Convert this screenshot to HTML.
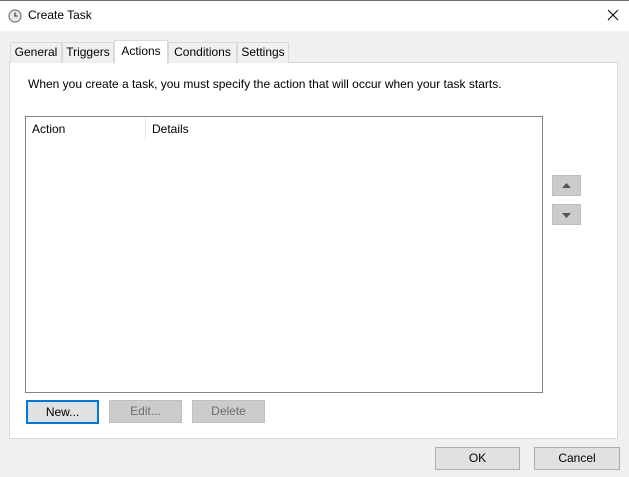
<!DOCTYPE html>
<html><head><style>
body{margin:0;width:629px;height:477px;background:#f0f0f0;font-family:"Liberation Sans",sans-serif;font-size:12px;color:#000;position:relative;overflow:hidden}
.a{position:absolute;box-sizing:border-box}
.tab{position:absolute;top:42px;height:21px;border:1px solid #d9d9d9;border-bottom:none;background:#f0f0f0;text-align:center;line-height:19px;box-sizing:border-box}
.btn{position:absolute;box-sizing:border-box;border:1px solid #adadad;background:#e1e1e1;text-align:center;line-height:21px}
.dis{background:#cccccc;border-color:#bfbfbf;color:#6d6d6d}
</style></head><body>
<div class="a" style="left:0;top:0;width:629px;height:31px;background:#fff;border-top:1px solid #6e6e6e"></div>
<svg class="a" style="left:8px;top:9px" width="14" height="14" viewBox="0 0 14 14"><circle cx="7" cy="7" r="6" fill="#e8e8e8" stroke="#777" stroke-width="1.2"/><path d="M7 3.5V7H9.5" stroke="#444" stroke-width="1.2" fill="none"/></svg>
<div class="a" style="left:28px;top:8px;font-size:12px">Create Task</div>
<svg class="a" style="left:607px;top:9px" width="12" height="12"><path d="M1 1L11 11M11 1L1 11" stroke="#000" stroke-width="1"/></svg>
<div class="a" style="left:9px;top:62px;width:609px;height:377px;background:#fff;border:1px solid #d9d9d9"></div>
<div class="tab" style="left:10px;width:52px">General</div>
<div class="tab" style="left:62px;width:52px">Triggers</div>
<div class="tab" style="left:114px;width:54px;top:40px;height:24px;background:#fff;line-height:20px">Actions</div>
<div class="tab" style="left:168px;width:69px">Conditions</div>
<div class="tab" style="left:237px;width:52px">Settings</div>
<div class="a" style="left:28px;top:77px">When you create a task, you must specify the action that will occur when your task starts.</div>
<div class="a" style="left:25px;top:116px;width:518px;height:277px;background:#fff;border:1px solid #828282"></div>
<div class="a" style="left:32px;top:122px">Action</div>
<div class="a" style="left:145px;top:118px;width:1px;height:22px;background:#e5e5e5"></div>
<div class="a" style="left:152px;top:122px">Details</div>
<div class="btn dis" style="left:552px;top:175px;width:29px;height:21px"><svg width="9" height="5" style="position:absolute;left:9px;top:7px"><path d="M0 5L4.5 0L9 5Z" fill="#555"/></svg></div>
<div class="btn dis" style="left:552px;top:204px;width:29px;height:21px"><svg width="9" height="5" style="position:absolute;left:9px;top:8px"><path d="M0 0L4.5 5L9 0Z" fill="#555"/></svg></div>
<div class="btn" style="left:26px;top:400px;width:73px;height:24px;border:2px solid #0078d7;line-height:20px">New...</div>
<div class="btn dis" style="left:109px;top:400px;width:73px;height:23px">Edit...</div>
<div class="btn dis" style="left:192px;top:400px;width:73px;height:23px">Delete</div>
<div class="btn" style="left:435px;top:447px;width:85px;height:23px">OK</div>
<div class="btn" style="left:534px;top:447px;width:86px;height:23px">Cancel</div>
</body></html>
